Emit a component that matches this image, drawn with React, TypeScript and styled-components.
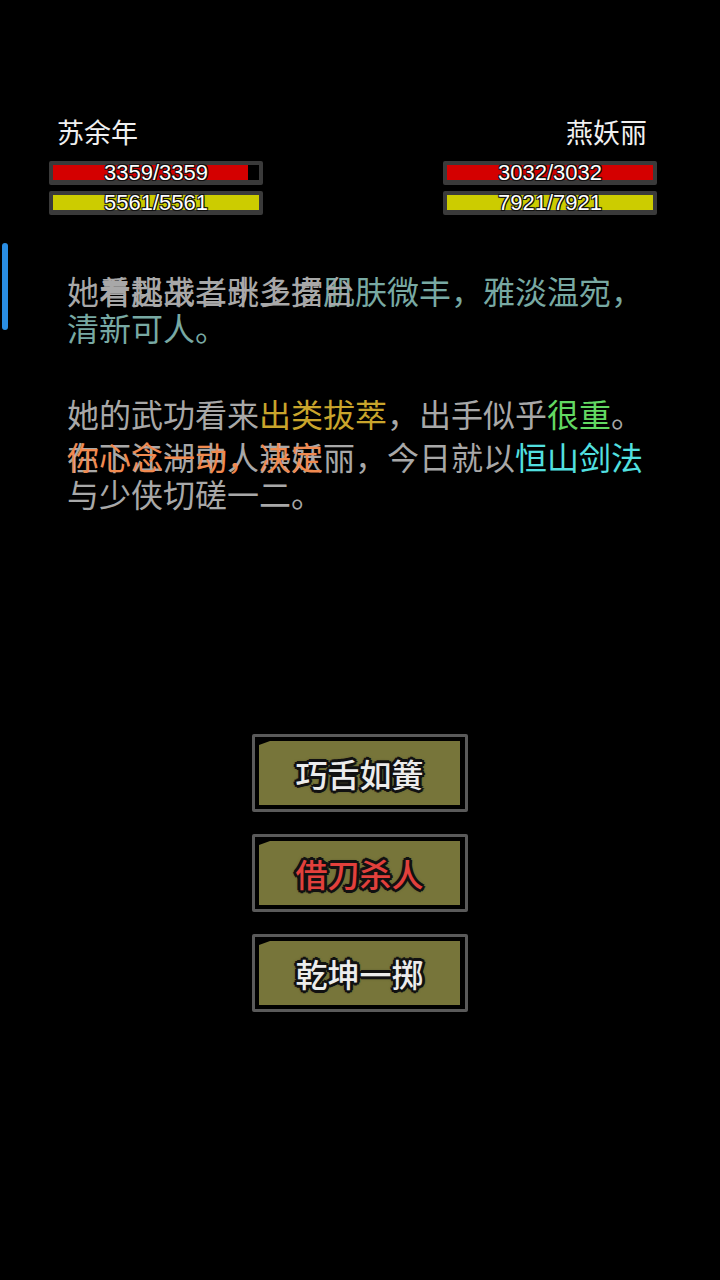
import React from "react";
import styled, { createGlobalStyle } from "styled-components";

const GlobalStyle = createGlobalStyle`
  html, body {
    margin: 0;
    padding: 0;
    background: #000;
  }
  body {
    font-family: "Noto Sans CJK SC", "Noto Sans", sans-serif;
  }
`;

const Page = styled.div`
  position: relative;
  width: 720px;
  min-height: 1280px;
  background: #000;
  display: flex;
  flex-direction: column;
`;

const ScrollIndicator = styled.div`
  position: absolute;
  left: 2px;
  top: 243px;
  width: 6px;
  height: 87px;
  border-radius: 3px;
  background: #2a8ee4;
`;

const Header = styled.header`
  display: flex;
  justify-content: space-between;
  padding: 117px 63px 0 49px;
`;

const Fighter = styled.div`
  width: 214px;
  display: flex;
  flex-direction: column;
  gap: 6px;
`;

const Name = styled.div<{ $align: "left" | "right" }>`
  font-size: 27px;
  line-height: 30px;
  color: #f0f0f0;
  text-align: ${(p) => p.$align};
  padding: 0 10px 0 8px;
  margin-bottom: 8px;
`;

const Bar = styled.div`
  position: relative;
  height: 24px;
  box-sizing: border-box;
  border: 4px solid #3a3a3a;
  border-bottom-width: 5px;
  border-radius: 2px;
  background: #000;
`;

const Fill = styled.div<{ $color: string }>`
  height: 100%;
  background: ${(p) => p.$color};
`;

const BarLabel = styled.span`
  position: absolute;
  inset: -4px 0 -5px 0;
  display: flex;
  align-items: center;
  justify-content: center;
  font-family: "Liberation Sans", Arial, sans-serif;
  font-size: 22px;
  color: #fff;
  text-shadow: -1px -1px 0 #111, 1px -1px 0 #111, -1px 1px 0 #111,
    1px 1px 0 #111, 0 0 2px #000;
`;

const Log = styled.section`
  display: flex;
  flex-direction: column;
  gap: 6px;
  padding: 57px 63px 0 67px;
  font-size: 32px;
  line-height: 37px;
  color: #a8a8a8;
`;

const Message = styled.p`
  position: relative;
  margin: 0;
  min-height: 37px;
`;

const toneColors: Record<string, string> = {
  plain: "#a8a8a8",
  teal: "#78a9a3",
  gold: "#c9a52c",
  green: "#62d862",
  cyan: "#52e0e0",
  orange: "#f08a50",
};

const Tone = styled.span<{ $tone: string }>`
  color: ${(p) => toneColors[p.$tone]};
`;

const Overlay = styled.span<{ $offset: number; $tone: string }>`
  position: absolute;
  top: 0;
  left: ${(p) => p.$offset}em;
  white-space: nowrap;
  color: ${(p) => toneColors[p.$tone]};
`;

const Actions = styled.nav`
  display: flex;
  flex-direction: column;
  align-items: center;
  gap: 22px;
  margin-top: 222px;
`;

const ActionButton = styled.button`
  width: 216px;
  height: 78px;
  box-sizing: border-box;
  border: 3px solid #5a5a5a;
  border-radius: 2px;
  background: #000;
  padding: 4px 5px 4px 4px;
  cursor: pointer;
  display: flex;
`;

const ActionPanel = styled.span<{ $color: string }>`
  flex: 1;
  display: flex;
  align-items: center;
  justify-content: center;
  background: #77753a;
  clip-path: polygon(11px 0, 100% 0, 100% 100%, 0 100%, 0 4px);
  font-family: "Noto Sans CJK SC", sans-serif;
  font-size: 32px;
  font-weight: 500;
  line-height: 1;
  color: ${(p) => p.$color};
  text-shadow: -2px -2px 0 #111, 2px -2px 0 #111, -2px 2px 0 #111,
    2px 2px 0 #111, 0 -3px 0 #111, 0 3px 0 #111, -3px 0 0 #111,
    3px 0 0 #111, 0 0 4px #000;
`;

type Seg = { t: string; tone: string };

type Msg = {
  segs: Seg[];
  overlay?: { text: string; offset: number; tone: string };
};

const messages: Msg[] = [
  {
    segs: [
      { t: "她看起来二十多岁", tone: "plain" },
      { t: "肌肤微丰，雅淡温宛，清新可人。", tone: "teal" },
    ],
    overlay: { text: "着挑战者跳上擂台", offset: 1, tone: "plain" },
  },
  { segs: [] },
  {
    segs: [
      { t: "她的武功看来", tone: "plain" },
      { t: "出类拔萃", tone: "gold" },
      { t: "，出手似乎", tone: "plain" },
      { t: "很重", tone: "green" },
      { t: "。", tone: "plain" },
    ],
  },
  {
    segs: [
      { t: "在下江湖中人燕妖丽，今日就以", tone: "plain" },
      { t: "恒山剑法", tone: "cyan" },
      { t: "与少侠切磋一二。", tone: "plain" },
    ],
    overlay: { text: "你心念一动，决定", offset: 0, tone: "orange" },
  },
];

const fighters = [
  {
    name: "苏余年",
    align: "left" as const,
    hp: [3359, 3359],
    hpFill: 94.6,
    mp: [5561, 5561],
  },
  {
    name: "燕妖丽",
    align: "right" as const,
    hp: [3032, 3032],
    hpFill: 100,
    mp: [7921, 7921],
  },
];

const actions = [
  { label: "巧舌如簧", color: "#ececec" },
  { label: "借刀杀人", color: "#e2403c" },
  { label: "乾坤一掷", color: "#ececec" },
];

export default function App() {
  return (
    <>
      <GlobalStyle />
      <Page>
        <ScrollIndicator />
        <Header>
          {fighters.map((f) => (
            <Fighter key={f.name}>
              <Name $align={f.align}>{f.name}</Name>
              <Bar>
                <Fill $color="#d40000" style={{ width: `${f.hpFill}%` }} />
                <BarLabel>
                  {f.hp[0]}/{f.hp[1]}
                </BarLabel>
              </Bar>
              <Bar>
                <Fill
                  $color="#cccc00"
                  style={{ width: `${(f.mp[0] / f.mp[1]) * 100}%` }}
                />
                <BarLabel>
                  {f.mp[0]}/{f.mp[1]}
                </BarLabel>
              </Bar>
            </Fighter>
          ))}
        </Header>
        <Log>
          {messages.map((m, i) => (
            <Message key={i}>
              {m.segs.map((s, j) => (
                <Tone key={j} $tone={s.tone}>
                  {s.t}
                </Tone>
              ))}
              {m.overlay && (
                <Overlay $offset={m.overlay.offset} $tone={m.overlay.tone}>
                  {m.overlay.text}
                </Overlay>
              )}
            </Message>
          ))}
        </Log>
        <Actions>
          {actions.map((a) => (
            <ActionButton key={a.label}>
              <ActionPanel $color={a.color}>{a.label}</ActionPanel>
            </ActionButton>
          ))}
        </Actions>
      </Page>
    </>
  );
}
